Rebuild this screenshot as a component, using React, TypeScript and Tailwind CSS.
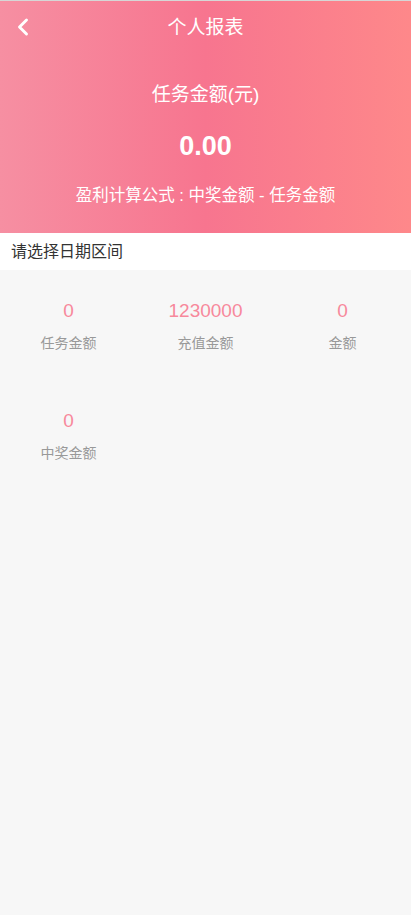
import { ChevronLeft } from 'lucide-react'

const STATS = [
  { value: '0', label: '任务金额' },
  { value: '1230000', label: '充值金额' },
  { value: '0', label: '金额' },
  { value: '0', label: '中奖金额' },
]

export default function App() {
  return (
    <div
      className="min-h-[915px] bg-[#f7f7f7]"
      style={{ fontFamily: '"Liberation Sans", "Noto Sans CJK SC", sans-serif' }}
    >
      <div className="border-t border-[#d6d6d6] bg-[linear-gradient(90deg,#f68fa2_0%,#f7758f_50%,#fe888a_100%)] text-white">
        <div className="relative flex h-[55px] items-center justify-center">
          <ChevronLeft className="absolute left-[9px] top-[12px] h-[28px] w-[28px]" strokeWidth={2.5} />
          <span className="text-[19px]">个人报表</span>
        </div>
        <div className="flex flex-col items-center pb-[26px] pt-[26px]">
          <div className="text-[19px] leading-[26px]">任务金额(元)</div>
          <div className="mt-[23px] text-[27px] font-bold leading-[30px]">0.00</div>
          <div className="mt-[22px] text-[16.5px] leading-[24px]">盈利计算公式 : 中奖金额 - 任务金额</div>
        </div>
      </div>
      <div className="bg-white px-[11px] pb-[7px] pt-[8px] text-[16px] leading-[22px] text-[#333]">
        请选择日期区间
      </div>
      <div className="grid grid-cols-3 pt-[29px]">
        {STATS.map((s, i) => (
          <div key={i} className="flex h-[110px] flex-col items-center">
            <div className="text-[19px] leading-[24px] text-[#f7899c]">{s.value}</div>
            <div className="mt-[10px] text-[14px] leading-[20px] text-[#999]">{s.label}</div>
          </div>
        ))}
      </div>
    </div>
  )
}
